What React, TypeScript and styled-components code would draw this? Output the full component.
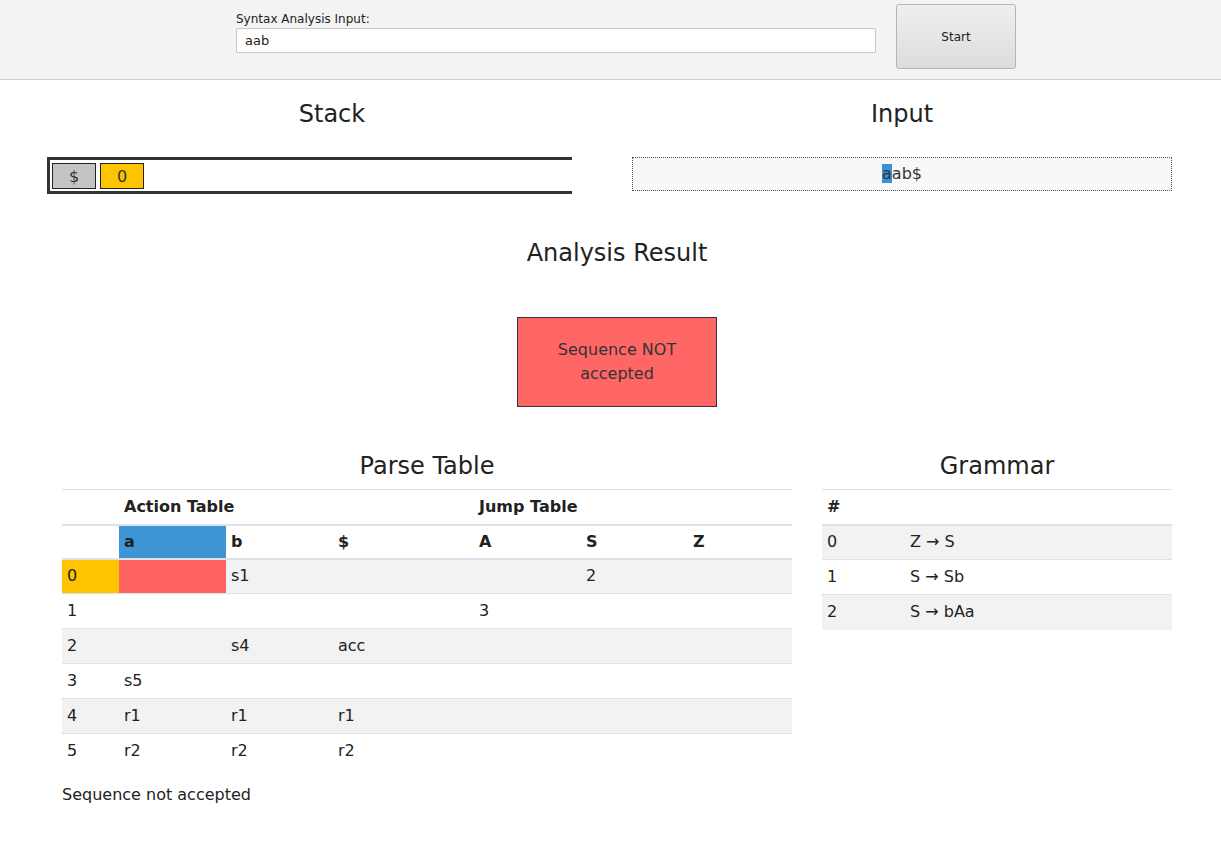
import * as React from 'react'
import styled, { createGlobalStyle } from 'styled-components'

// Page-wide reset and font
const GlobalStyle = createGlobalStyle`
	body {
		margin: 0;
		background: #fff;
		color: #222;
		font-family: "DejaVu Sans", Verdana, sans-serif;
		font-size: 16px;
		line-height: 24px;
	}
	* {
		box-sizing: border-box;
	}
`

type Cell = string
const actionCols = ['a', 'b', '$']
const jumpCols = ['A', 'S', 'Z']
const colWidths = [57, 107, 107, 141, 107, 107, 104]

// Rows of the parse table: state, a, b, $, A, S, Z
const parseRows: Cell[][] = [
	['0', '', 's1', '', '', '2', ''],
	['1', '', '', '', '3', '', ''],
	['2', '', 's4', 'acc', '', '', ''],
	['3', 's5', '', '', '', '', ''],
	['4', 'r1', 'r1', 'r1', '', '', ''],
	['5', 'r2', 'r2', 'r2', '', '', '']
]

const grammar = [
	['0', 'Z → S'],
	['1', 'S → Sb'],
	['2', 'S → bAa']
]

const stack = [
	{ label: '$', tone: 'end' as const },
	{ label: '0', tone: 'state' as const }
]

const App: React.FC = () => {
	return (
		<>
			<GlobalStyle />
			{/* Top bar with input */}
			<TopBar>
				<InputGroup>
					<Label>Syntax Analysis Input:</Label>
					<TextInput defaultValue="aab" />
				</InputGroup>
				<StartButton>Start</StartButton>
			</TopBar>

			<Container>
				{/* Stack and input */}
				<Row>
					<Column>
						<Title>Stack</Title>
						<StackBox>
							{stack.map((item, i) => (
								<StackItem tone={item.tone} key={i}>{item.label}</StackItem>
							))}
						</StackBox>
					</Column>
					<Column>
						<Title>Input</Title>
						<InputTape>
							<Current>a</Current>ab$
						</InputTape>
					</Column>
				</Row>

				{/* Result */}
				<ResultSection>
					<Title>Analysis Result</Title>
					<ResultBox>Sequence NOT<br />accepted</ResultBox>
				</ResultSection>

				{/* Tables */}
				<TablesRow>
					<ParseColumn>
						<Title>Parse Table</Title>
						<Table>
							<colgroup>
								{colWidths.map((w, i) => <col key={i} style={{ width: w }} />)}
							</colgroup>
							<thead>
								<HeadRow h={35}>
									<Th />
									<Th colSpan={3}>Action Table</Th>
									<Th colSpan={3}>Jump Table</Th>
								</HeadRow>
								<HeadRow h={34}>
									<Th />
									{actionCols.map((c, i) => <Th key={c} active={i === 0}>{c}</Th>)}
									{jumpCols.map(c => <Th key={c}>{c}</Th>)}
								</HeadRow>
							</thead>
							<tbody>
								{parseRows.map((row, r) => (
									<Tr key={r} striped={r % 2 === 0}>
										{row.map((cell, c) => (
											<Td key={c} mark={r === 0 && c === 0 ? 'state' : r === 0 && c === 1 ? 'error' : undefined}>{cell}</Td>
										))}
									</Tr>
								))}
							</tbody>
						</Table>
					</ParseColumn>
					<GrammarColumn>
						<Title>Grammar</Title>
						<Table>
							<colgroup>
								<col style={{ width: 83 }} />
								<col />
							</colgroup>
							<thead>
								<HeadRow h={35}>
									<Th>#</Th>
									<Th />
								</HeadRow>
							</thead>
							<tbody>
								{grammar.map((g, r) => (
									<Tr key={r} striped={r % 2 === 0}>
										<Td>{g[0]}</Td>
										<Td>{g[1]}</Td>
									</Tr>
								))}
							</tbody>
						</Table>
					</GrammarColumn>
				</TablesRow>

				<Status>Sequence not accepted</Status>
			</Container>
		</>
	)
}

export default App

const TopBar = styled.div`
	display: flex;
	align-items: flex-start;
	gap: 20px;
	height: 80px;
	padding: 4px 0 0 236px;
	background: #f3f3f3;
	border-bottom: 1px solid #cfcfcf;
`

const InputGroup = styled.div`
	display: flex;
	flex-direction: column;
	width: 640px;
	margin-top: 7px;
`

const Label = styled.label`
	font-size: 12px;
	line-height: 17px;
	color: #222;
`

const TextInput = styled.input`
	height: 25px;
	padding: 0 8px;
	border: 1px solid #c8c8c8;
	border-radius: 2px;
	background: #fff;
	font-family: "DejaVu Sans", sans-serif;
	font-size: 13px;
	color: #2a1a10;
	outline: none;
`

const StartButton = styled.button`
	width: 120px;
	height: 65px;
	padding-top: 2px;
	border: 1px solid #b4b4b4;
	border-radius: 3px;
	background: linear-gradient(#efefef, #dcdcdc);
	font-family: "DejaVu Sans", sans-serif;
	font-size: 12px;
	color: #222;
`

const Container = styled.div`
	width: 1110px;
	margin-left: 62px;
	padding-top: 20px;
`

const Row = styled.div`
	display: flex;
	gap: 30px;
`

const Column = styled.div`
	flex: 0 0 540px;
	display: flex;
	flex-direction: column;
`

const Title = styled.h2`
	margin: 0;
	font-size: 24px;
	line-height: 28px;
	font-weight: normal;
	text-align: center;
	color: #222;
`

const StackBox = styled.div`
	display: flex;
	gap: 4px;
	width: 525px;
	height: 37px;
	margin: 29px 0 0 -15px;
	padding: 3px 0 0 2px;
	border: 3px solid #333;
	border-right: none;
`

const StackItem = styled.div<{ tone: 'end' | 'state' }>`
	width: 44px;
	height: 26px;
	padding-top: 1px;
	border: 1px solid #222;
	background: ${p => (p.tone === 'end' ? '#c4c4c4' : '#ffc400')};
	text-align: center;
	font-size: 16px;
	line-height: 23px;
	color: #333;
`

const InputTape = styled.div`
	height: 34px;
	margin-top: 29px;
	border: 1px dotted #555;
	background: #f8f8f8;
	text-align: center;
	line-height: 32px;
	color: #333;
`

const Current = styled.span`
	background: #3d8fd6;
`

const ResultSection = styled.div`
	display: flex;
	flex-direction: column;
	align-items: center;
	padding-top: 45px;
`

const ResultBox = styled.div`
	display: flex;
	align-items: center;
	justify-content: center;
	width: 200px;
	height: 90px;
	margin-top: 50px;
	border: 1px solid #333;
	background: #ff6666;
	text-align: center;
	color: #333;
`

const TablesRow = styled.div`
	display: flex;
	gap: 30px;
	margin-top: 45px;
`

const ParseColumn = styled.div`
	flex: 0 0 730px;
`

const GrammarColumn = styled.div`
	flex: 0 0 350px;
`

const Table = styled.table`
	width: 100%;
	margin-top: 9px;
	border-collapse: collapse;
	table-layout: fixed;
`

const HeadRow = styled.tr<{ h: number }>`
	height: ${p => p.h}px;
`

const Th = styled.th<{ active?: boolean }>`
	padding: 4px 5px;
	border-top: 1px solid #dee2e6;
	border-bottom: 2px solid #dee2e6;
	background: ${p => (p.active ? '#3f96d6' : 'transparent')};
	text-align: left;
	font-weight: bold;
	color: #222;
`

const Tr = styled.tr<{ striped: boolean }>`
	background: ${p => (p.striped ? '#f2f2f2' : '#fff')};
`

const Td = styled.td<{ mark?: 'state' | 'error' }>`
	height: 35px;
	padding: 4px 5px;
	border-top: 1px solid #dee2e6;
	background: ${p => (p.mark === 'state' ? '#ffc400' : p.mark === 'error' ? '#ff6262' : 'transparent')};
	color: #222;
`

const Status = styled.p`
	margin: 14px 0 0;
	color: #222;
`
